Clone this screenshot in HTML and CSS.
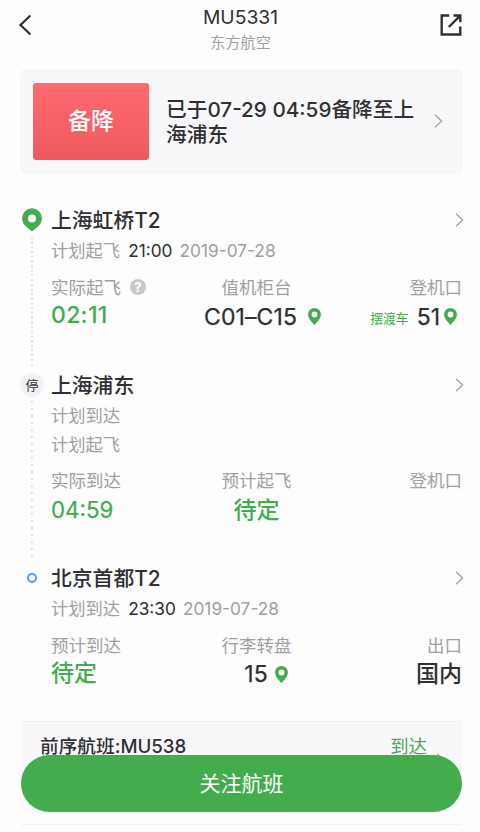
FILE: index.html
```html
<!DOCTYPE html>
<html lang="zh-CN">
<head>
<meta charset="utf-8">
<meta name="viewport" content="width=device-width, initial-scale=1">
<title>MU5331 东方航空</title>
<link rel="stylesheet" href="styles.css">
</head>
<body>
<svg class="defs" width="0" height="0" aria-hidden="true">
  <symbol id="pin" viewBox="0 0 13 17"><path fill="#43ad4e" fill-rule="evenodd" d="M6.5 0A6.4 6.4 0 0 0 .1 6.4C.1 10.7 4 14.1 6.5 17 9 14.1 12.9 10.7 12.9 6.4A6.4 6.4 0 0 0 6.5 0Zm0 3.6a2.9 2.9 0 1 1 0 5.8 2.9 2.9 0 0 1 0-5.8Z"/></symbol>
  <symbol id="chevron" viewBox="0 0 9 14"><path d="M1 .8 7.6 7 1 13.2" fill="none" stroke="#a5a5aa" stroke-width="1.4"/></symbol>
</svg>
<div class="screen">
  <header class="topbar">
    <svg class="back" viewBox="0 0 14 22"><path d="M12.4 1.5 2.5 11l9.9 9.500" fill="none" stroke="#303033" stroke-width="2.2"/></svg>
    <div class="heading">
      <h1 class="flight">MU5331</h1>
      <p class="airline">东方航空</p>
    </div>
    <svg class="share" viewBox="0 0 22 22"><path d="M9.200 1.500H1.700v19h18.600V12.500M13.500 1.500h6.800v6.800M20 1.800 8.800 13" fill="none" stroke="#303033" stroke-width="2.400"/></svg>
  </header>

  <section class="alert">
    <div class="alert-tag">备降</div>
    <p class="alert-text">已于07-29 04:59备降至上海浦东</p>
    <svg class="chevron"><use href="#chevron"/></svg>
  </section>

  <main class="route">
    <article class="stop departure">
      <div class="rail"><svg class="marker-pin" viewBox="0 0 20 24"><path fill="#43ad4e" fill-rule="evenodd" d="M10 .3A10 10 0 0 0 0 10.3c0 4 2 6.500 4.800 9L10 23.500l5.200-4.200c2.800-2.500 4.800-5 4.800-9A10 10 0 0 0 10 .3Zm0 6.200a4 4 0 1 1 0 8 4 4 0 0 1 0-8Z"/></svg><i class="dots"></i></div>
      <div class="info">
        <div class="name"><h2>上海虹桥T2</h2><svg class="chevron"><use href="#chevron"/></svg></div>
        <p class="plan">计划起飞<b>21:00</b><span>2019-07-28</span></p>
        <dl class="facts">
          <div><dt>实际起飞<span class="help">?</span></dt><dd class="green wide">02:11</dd></div>
          <div><dt>值机柜台</dt><dd class="counter">C01–C15<svg class="pin"><use href="#pin"/></svg></dd></div>
          <div><dt>登机口</dt><dd class="gate"><small>摆渡车</small>51<svg class="pin"><use href="#pin"/></svg></dd></div>
        </dl>
      </div>
    </article>

    <article class="stop layover">
      <div class="rail"><span class="marker-stop">停</span><i class="dots"></i></div>
      <div class="info">
        <div class="name"><h2>上海浦东</h2><svg class="chevron"><use href="#chevron"/></svg></div>
        <p class="plan">计划到达</p>
        <p class="plan">计划起飞</p>
        <dl class="facts">
          <div><dt>实际到达</dt><dd class="green narrow">04:59</dd></div>
          <div><dt>预计起飞</dt><dd class="green">待定</dd></div>
          <div><dt>登机口</dt><dd></dd></div>
        </dl>
      </div>
    </article>

    <article class="stop arrival">
      <div class="rail"><span class="marker-end"></span></div>
      <div class="info">
        <div class="name"><h2>北京首都T2</h2><svg class="chevron"><use href="#chevron"/></svg></div>
        <p class="plan">计划到达<b>23:30</b><span>2019-07-28</span></p>
        <dl class="facts">
          <div><dt>预计到达</dt><dd class="green raised">待定</dd></div>
          <div><dt>行李转盘</dt><dd class="belt">15<svg class="pin"><use href="#pin"/></svg></dd></div>
          <div><dt>出口</dt><dd class="strong">国内</dd></div>
        </dl>
      </div>
    </article>
  </main>

  <section class="previous">
    <span class="previous-flight">前序航班:MU538</span>
    <span class="previous-state">到达</span>
    <svg class="chevron"><use href="#chevron"/></svg>
  </section>
  <button class="follow" type="button">关注航班</button>
</div>
</body>
</html>
```
FILE: styles.css
```css
* { box-sizing: border-box; margin: 0; padding: 0; }
body {
  background: #fdfdfe;
  color: #303033;
  font-family: Inter, "Noto Sans CJK SC", sans-serif;
}
.defs { position: absolute; }
.screen { position: relative; width: 480px; height: 832px; overflow: hidden; }
svg { display: block; flex: none; }
.chevron { width: 9px; height: 14px; }

.topbar { display: flex; justify-content: space-between; height: 70px; padding: 0 18px; }
.back { width: 14px; height: 22px; margin-top: 14px; }
.share { width: 22px; height: 22px; margin-top: 14px; }
.heading { text-align: center; padding: 4px 0 0 9px; }
.flight { height: 27px; line-height: 27px; font-size: 19.3px; font-weight: 400; }
.airline { height: 22px; line-height: 23px; font-size: 15.2px; color: #a0a0a4; }

.alert {
  display: flex; align-items: center;
  width: 441px; height: 103px; margin-left: 21px; padding: 0 18px 1px 11px;
  background: #f8f8fa; border: 1px solid #f3f3f5; border-radius: 4px;
}
.alert-tag {
  width: 116px; height: 77px; line-height: 77px; flex: none;
  text-align: center; color: #fff; font-size: 23px; font-weight: 500;
  background: linear-gradient(#fc6b70, #f05860); border-radius: 3px;
}
.alert-text { width: 254px; margin: 1px auto 0 17px; line-height: 25px; font-size: 20.7px; font-weight: 500; }

.route { padding: 32px 17px 0 21px; }
.stop { display: flex; }
.departure { height: 165px; }
.layover { height: 193px; }
.arrival { height: 158px; }
.rail { display: flex; flex-direction: column; align-items: center; width: 22px; margin-right: 8px; flex: none; }
.info { flex: 1; }
.dots {
  flex: 1; width: 2px; margin: 5px 0 3px;
  background: radial-gradient(circle at 1px 1px, #dedee1 0.7px, transparent 1.2px) 0 0 / 2px 4.7px repeat-y;
}
.layover .dots { margin-top: 4px; background-size: 2px 7px; }
.marker-pin { width: 20px; height: 24px; margin-top: 3px; }
.marker-stop {
  width: 24px; height: 24px; margin-top: 3px; border-radius: 50%;
  background: #f3f3f5; font-size: 13px; line-height: 24px; text-align: center;
}
.marker-end { width: 10px; height: 10px; margin-top: 10px; border: 2.5px solid #559ddd; border-radius: 50%; }
.name { display: flex; align-items: center; justify-content: space-between; height: 30px; margin-right: -1px; }
.name h2 { font-size: 20.8px; line-height: 31px; font-weight: 500; }
.plan { height: 28px; margin-top: 2px; line-height: 28px; font-size: 17.3px; color: #a0a0a4; white-space: nowrap; }
.plan + .plan { margin-top: 0; line-height: 29px; }
.plan b { margin: 0 7px 0 8px; color: #303033; font-weight: 400; }
.facts { display: grid; grid-template-columns: 1fr 110px 1fr; margin-right: 1px; }
.facts > div { display: flex; flex-direction: column; align-items: flex-start; }
.facts > div:nth-child(2) { align-items: center; }
.facts > div:nth-child(3) { align-items: flex-end; }
dt { display: flex; align-items: center; height: 24px; margin-top: 10px; line-height: 25px; font-size: 17.5px; color: #a0a0a4; white-space: nowrap; }
dd { display: flex; align-items: center; height: 34px; line-height: 34px; font-size: 23px; white-space: nowrap; }
.green { color: #43ad4e; font-weight: 500; }
.wide { height: 32px; letter-spacing: .3px; }
.narrow { font-size: 22.3px; font-weight: 400; -webkit-text-stroke: .25px; }
.layover .green { height: 36px; }
.raised { height: 31px; }
.strong { font-weight: 500; }
.counter, .gate, .belt { -webkit-text-stroke: .25px; }
.counter, .gate { height: 35px; }
dd small { margin: 5px 8px 0 0; font-size: 12.8px; color: #43ad4e; -webkit-text-stroke: 0; }
.pin { width: 13px; height: 17px; margin-left: 4px; }
.counter { padding-left: 12px; letter-spacing: .1px; }
.counter .pin { margin-left: 11px; }
.gate { padding-right: 5px; }
.gate .pin { margin-left: 4px; }
.belt { padding-left: 19px; }
.belt .pin { margin-left: 7px; }
.help {
  width: 16px; height: 16px; margin-left: 9px; border-radius: 50%;
  background: #c8c8cb; color: #fff; font-size: 13px; line-height: 16px; font-weight: 700; text-align: center;
}

.previous {
  display: flex; align-items: flex-start;
  width: 441px; height: 104px; margin-left: 21px; padding: 12px 17px 0 18px;
  background: linear-gradient(#f8f8fa 60px, #fdfdfe 60px); border: solid #f1f1f3; border-width: 1px 0; border-radius: 3px 3px 0 0;
  line-height: 25px;
}
.previous-flight { margin-left: 1px; margin-right: auto; font-size: 18.7px; font-weight: 500; }
.previous-state { font-size: 18.4px; color: #43ad4e; }
.previous .chevron { margin: 19px 0 0 9px; }
.follow {
  position: absolute; left: 21px; top: 755px; width: 441px; height: 57px;
  border: 0; border-radius: 29px; background: #43ad4e;
  color: #fff; font: 400 21px/57px Inter, "Noto Sans CJK SC", sans-serif;
}
```
